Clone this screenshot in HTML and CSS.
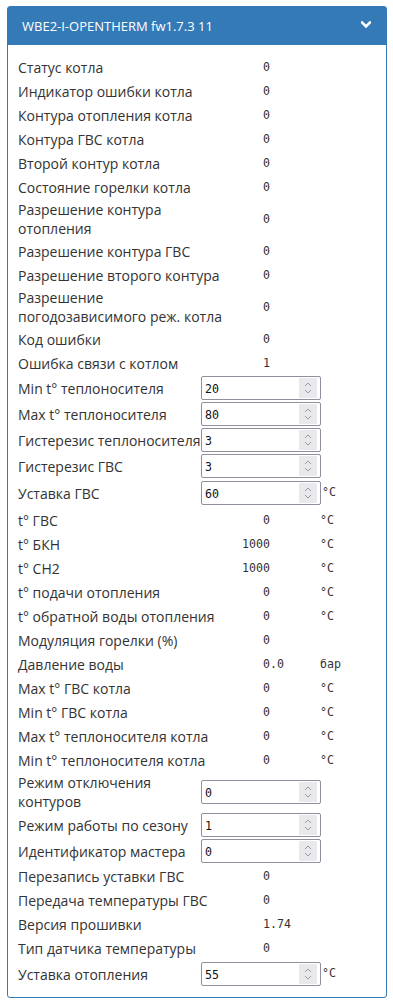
FILE: index.html
```html
<!DOCTYPE html>
<html lang="ru">
<head>
<meta charset="utf-8">
<title>WBE2-I-OPENTHERM</title>
<link rel="stylesheet" href="styles.css">
</head>
<body>
<div class="page">
  <div class="panel">
    <div class="panel-heading">
      <span class="title">WBE2-I-OPENTHERM fw1.7.3 11</span>
      <svg class="chev" width="10" height="8" viewBox="0 0 10 8"><path d="M1 1.5 L5 5.5 L9 1.5" fill="none" stroke="#fff" stroke-width="2.6" stroke-linecap="square"/></svg>
    </div>
    <div class="panel-body">
      <div class="row"><div class="lbl">Статус котла</div><div class="val">0</div></div>
      <div class="row"><div class="lbl">Индикатор ошибки котла</div><div class="val">0</div></div>
      <div class="row"><div class="lbl">Контура отопления котла</div><div class="val">0</div></div>
      <div class="row"><div class="lbl">Контура ГВС котла</div><div class="val">0</div></div>
      <div class="row"><div class="lbl">Второй контур котла</div><div class="val">0</div></div>
      <div class="row"><div class="lbl">Состояние горелки котла</div><div class="val">0</div></div>
      <div class="row"><div class="lbl">Разрешение контура<br>отопления</div><div class="val">0</div></div>
      <div class="row"><div class="lbl">Разрешение контура ГВС</div><div class="val">0</div></div>
      <div class="row"><div class="lbl">Разрешение второго контура</div><div class="val">0</div></div>
      <div class="row"><div class="lbl">Разрешение<br>погодозависимого реж. котла</div><div class="val">0</div></div>
      <div class="row"><div class="lbl">Код ошибки</div><div class="val">0</div></div>
      <div class="row"><div class="lbl">Ошибка связи с котлом</div><div class="val">1</div></div>
      <div class="row irow"><div class="lbl">Min t° теплоносителя</div><div class="inp"><span class="itext">20</span><span class="spin"><svg width="10" height="16" viewBox="0 0 10 16"><path d="M2 6 L5 3 L8 6 M2 10 L5 13 L8 10" fill="none" stroke="#9a9aa3" stroke-width="1"/></svg></span></div></div>
      <div class="row irow"><div class="lbl">Max t° теплоносителя</div><div class="inp"><span class="itext">80</span><span class="spin"><svg width="10" height="16" viewBox="0 0 10 16"><path d="M2 6 L5 3 L8 6 M2 10 L5 13 L8 10" fill="none" stroke="#9a9aa3" stroke-width="1"/></svg></span></div></div>
      <div class="row irow"><div class="lbl">Гистерезис теплоносителя</div><div class="inp"><span class="itext">3</span><span class="spin"><svg width="10" height="16" viewBox="0 0 10 16"><path d="M2 6 L5 3 L8 6 M2 10 L5 13 L8 10" fill="none" stroke="#9a9aa3" stroke-width="1"/></svg></span></div></div>
      <div class="row irow"><div class="lbl">Гистерезис ГВС</div><div class="inp"><span class="itext">3</span><span class="spin"><svg width="10" height="16" viewBox="0 0 10 16"><path d="M2 6 L5 3 L8 6 M2 10 L5 13 L8 10" fill="none" stroke="#9a9aa3" stroke-width="1"/></svg></span></div></div>
      <div class="row irow urow"><div class="lbl">Уставка ГВС</div><div class="inp"><span class="itext">60</span><span class="spin"><svg width="10" height="16" viewBox="0 0 10 16"><path d="M2 6 L5 3 L8 6 M2 10 L5 13 L8 10" fill="none" stroke="#9a9aa3" stroke-width="1"/></svg></span></div><div class="unit utop">°C</div></div>
      <div class="row"><div class="lbl">t° ГВС</div><div class="val t">   0</div><div class="unit">°C</div></div>
      <div class="row"><div class="lbl">t° БКН</div><div class="val t">1000</div><div class="unit">°C</div></div>
      <div class="row"><div class="lbl">t° CH2</div><div class="val t">1000</div><div class="unit">°C</div></div>
      <div class="row"><div class="lbl">t° подачи отопления</div><div class="val t">   0</div><div class="unit">°C</div></div>
      <div class="row"><div class="lbl">t° обратной воды отопления</div><div class="val t">   0</div><div class="unit">°C</div></div>
      <div class="row"><div class="lbl">Модуляция горелки (%)</div><div class="val">0</div></div>
      <div class="row"><div class="lbl">Давление воды</div><div class="val">0.0</div><div class="unit">бар</div></div>
      <div class="row"><div class="lbl">Max t° ГВС котла</div><div class="val t">   0</div><div class="unit">°C</div></div>
      <div class="row"><div class="lbl">Min t° ГВС котла</div><div class="val t">   0</div><div class="unit">°C</div></div>
      <div class="row"><div class="lbl">Max t° теплоносителя котла</div><div class="val t">   0</div><div class="unit">°C</div></div>
      <div class="row"><div class="lbl">Min t° теплоносителя котла</div><div class="val t">   0</div><div class="unit">°C</div></div>
      <div class="row irow"><div class="lbl">Режим отключения<br>контуров</div><div class="inp"><span class="itext">0</span><span class="spin"><svg width="10" height="16" viewBox="0 0 10 16"><path d="M2 6 L5 3 L8 6 M2 10 L5 13 L8 10" fill="none" stroke="#9a9aa3" stroke-width="1"/></svg></span></div></div>
      <div class="row irow"><div class="lbl">Режим работы по сезону</div><div class="inp"><span class="itext">1</span><span class="spin"><svg width="10" height="16" viewBox="0 0 10 16"><path d="M2 6 L5 3 L8 6 M2 10 L5 13 L8 10" fill="none" stroke="#9a9aa3" stroke-width="1"/></svg></span></div></div>
      <div class="row irow"><div class="lbl">Идентификатор мастера</div><div class="inp"><span class="itext">0</span><span class="spin"><svg width="10" height="16" viewBox="0 0 10 16"><path d="M2 6 L5 3 L8 6 M2 10 L5 13 L8 10" fill="none" stroke="#9a9aa3" stroke-width="1"/></svg></span></div></div>
      <div class="row"><div class="lbl">Перезапись уставки ГВС</div><div class="val">0</div></div>
      <div class="row"><div class="lbl">Передача температуры ГВС</div><div class="val">0</div></div>
      <div class="row"><div class="lbl">Версия прошивки</div><div class="val">1.74</div></div>
      <div class="row"><div class="lbl">Тип датчика температуры</div><div class="val">0</div></div>
      <div class="row irow urow"><div class="lbl">Уставка отопления</div><div class="inp"><span class="itext">55</span><span class="spin"><svg width="10" height="16" viewBox="0 0 10 16"><path d="M2 6 L5 3 L8 6 M2 10 L5 13 L8 10" fill="none" stroke="#9a9aa3" stroke-width="1"/></svg></span></div><div class="unit utop">°C</div></div>
    </div>
  </div>
</div>
</body>
</html>
```

FILE: styles.css
```css
html, body {
  margin: 0;
  padding: 0;
  background: #fff;
}
.page {
  padding: 6px 6px 9px 7px;
  font-family: "Open Sans", "Noto Sans", sans-serif;
  color: #333;
}
.panel {
  border: 1px solid #337ab7;
  border-radius: 3px;
  background: #fff;
}
.panel-heading {
  background: #337ab7;
  color: #fff;
  height: 38px;
  padding: 0 15px 0 14px;
  display: flex;
  align-items: center;
  justify-content: space-between;
  font-size: 13px;
}
.chev {
  display: block;
  margin-top: -2px;
}
.panel-body {
  padding: 10px 10px 8px 10px;
}
.row {
  display: flex;
  align-items: center;
  min-height: 22px;
  padding: 1px 0;
}
.row.urow {
  padding: 2px 0 3px;
}
.lbl {
  width: 183px;
  flex: none;
  font-size: 14px;
  line-height: 19px;
  white-space: nowrap;
}
.val {
  width: 57px;
  padding-left: 62px;
  flex: none;
  font-family: "DejaVu Sans Mono", monospace;
  font-size: 11.6px;
  white-space: pre;
  color: #333;
}
.val.t {
  padding-left: 41px;
  width: 78px;
}
.unit {
  font-family: "DejaVu Sans Mono", monospace;
  font-size: 11.6px;
  color: #333;
}
.utop {
  align-self: flex-start;
  padding-top: 4px;
  margin-left: 1px;
}
.inp {
  height: 22px;
  flex: none;
  border: 1px solid #8f8f9d;
  border-radius: 2px;
  display: flex;
  align-items: center;
  justify-content: space-between;
  padding: 0 3px 0 0;
  box-sizing: content-box;
  width: 115px;
}
.itext {
  padding-left: 3px;
  font-family: "DejaVu Sans Mono", monospace;
  font-size: 11.6px;
  color: #111;
  padding-top: 2px;
}
.spin {
  width: 18px;
  height: 20px;
  background: #e9e9ed;
  display: flex;
  align-items: center;
  justify-content: center;
}
.spin svg { display: block; }
```
